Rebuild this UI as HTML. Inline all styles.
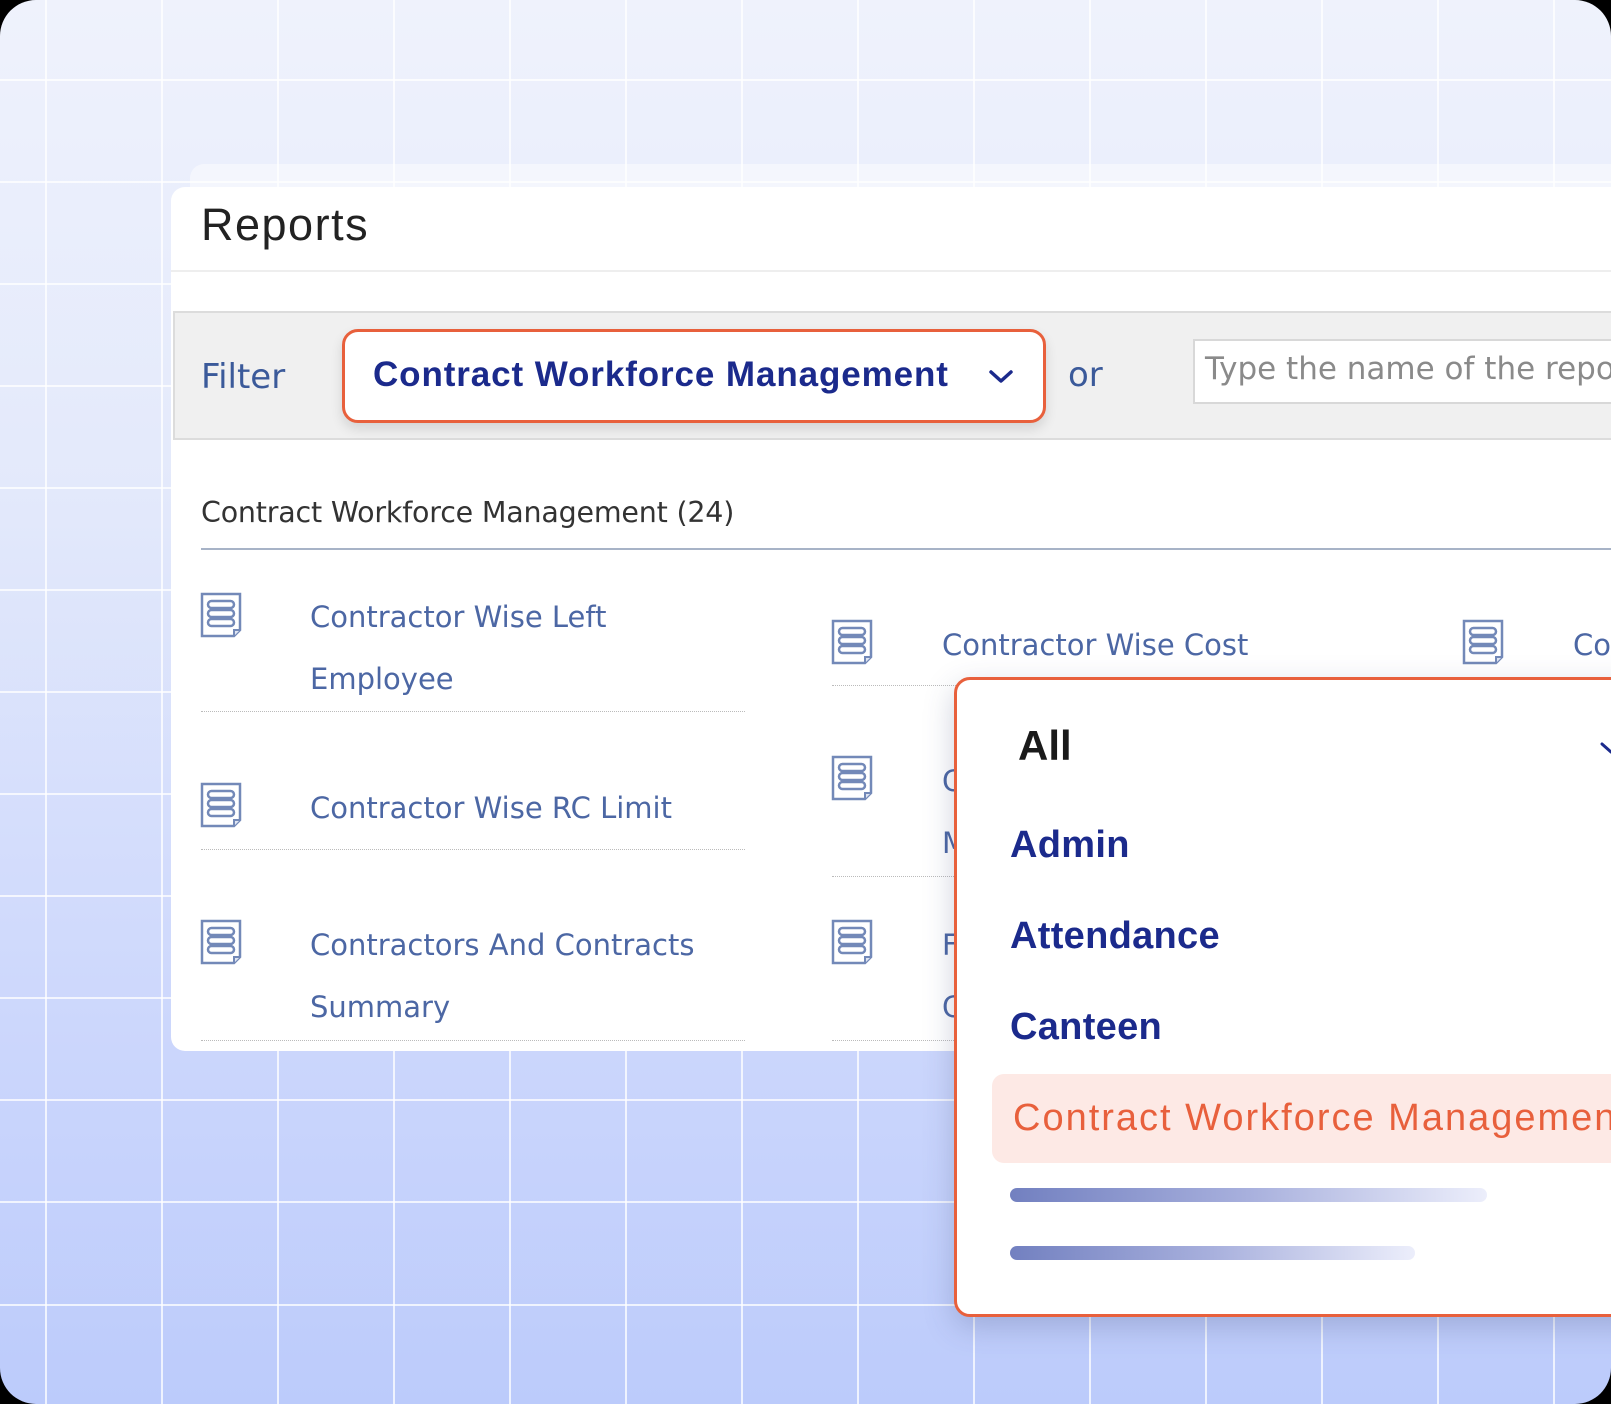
<!DOCTYPE html>
<html><head><meta charset="utf-8"><style>
*{margin:0;padding:0;box-sizing:border-box}
html,body{width:1611px;height:1404px;overflow:hidden;background:#000}
#bg{position:absolute;left:0;top:0;width:1611px;height:1404px;border-radius:36px;overflow:hidden;
background:linear-gradient(180deg,#eff2fc 0%,#e3e9fb 35%,#cbd6fc 75%,#bccbfb 100%);font-family:"Liberation Sans","DejaVu Sans",sans-serif}
.vl{position:absolute;top:0;width:2px;height:1404px;background:rgba(255,255,255,.75)}
.hl{position:absolute;left:0;height:2px;width:1611px;background:rgba(255,255,255,.75)}
.abs{position:absolute;white-space:nowrap}
.card{position:absolute;left:171px;top:187px;width:1500px;height:864px;background:#fff;border-radius:14px}
.it{position:absolute;font-family:"DejaVu Sans","Liberation Sans",sans-serif;font-size:29px;color:#4c67a4;white-space:nowrap;letter-spacing:0}
.dot{position:absolute;height:0;border-top:1px dotted #bbb}
.ic{position:absolute;width:42px;height:46px}
.pop{position:absolute;left:954px;top:677px;width:720px;height:640px;background:#fff;border:3px solid #e8603c;border-radius:16px;box-shadow:0 10px 30px rgba(60,70,120,.25)}
.opt{position:absolute;font-size:38px;color:#1b2a8c;white-space:nowrap;font-weight:700;letter-spacing:0.3px}
</style></head><body>
<div id="bg">
<div class="vl" style="left:45px"></div><div class="vl" style="left:161px"></div><div class="vl" style="left:277px"></div><div class="vl" style="left:393px"></div><div class="vl" style="left:509px"></div><div class="vl" style="left:625px"></div><div class="vl" style="left:741px"></div><div class="vl" style="left:857px"></div><div class="vl" style="left:973px"></div><div class="vl" style="left:1089px"></div><div class="vl" style="left:1205px"></div><div class="vl" style="left:1321px"></div><div class="vl" style="left:1437px"></div><div class="vl" style="left:1553px"></div>
<div class="hl" style="top:79px"></div><div class="hl" style="top:181px"></div><div class="hl" style="top:283px"></div><div class="hl" style="top:385px"></div><div class="hl" style="top:487px"></div><div class="hl" style="top:589px"></div><div class="hl" style="top:691px"></div><div class="hl" style="top:793px"></div><div class="hl" style="top:895px"></div><div class="hl" style="top:997px"></div><div class="hl" style="top:1099px"></div><div class="hl" style="top:1201px"></div><div class="hl" style="top:1304px"></div>
<div style="position:absolute;left:190px;top:164px;width:1500px;height:40px;background:rgba(255,255,255,.45);border-radius:14px"></div>
<div class="card">
 <div class="abs" style="left:30px;top:12px;font-size:45px;color:#222;letter-spacing:1.5px">Reports</div>
 <div style="position:absolute;left:0;top:83px;width:1500px;height:2px;background:#eee"></div>
 <div style="position:absolute;left:2px;top:124px;width:1500px;height:129px;background:#f0f0f0;border:2px solid #dcdcdc"></div>
 <div class="abs" style="left:30px;top:170px;font-family:'DejaVu Sans',sans-serif;font-size:34px;color:#3b5a9a">Filter</div>
 <div style="position:absolute;left:171px;top:142px;width:704px;height:94px;background:#fff;border:3px solid #e8603c;border-radius:16px;box-shadow:0 6px 12px rgba(0,0,0,.12)">
  <div class="abs" style="left:28px;top:23px;font-size:35px;color:#1b2a8c;font-weight:700;letter-spacing:0.9px">Contract Workforce Management</div>
  <svg class="abs" style="left:643px;top:36px" width="26" height="18" viewBox="0 0 26 18"><path d="M3 4 L13 13 L23 4" fill="none" stroke="#1b2a8c" stroke-width="3.5" stroke-linecap="round" stroke-linejoin="round"/></svg>
 </div>
 <div class="abs" style="left:897px;top:168px;font-family:'DejaVu Sans',sans-serif;font-size:34px;color:#3b5a9a">or</div>
 <div style="position:absolute;left:1022px;top:152px;width:500px;height:65px;background:#fff;border:2px solid #d8d8d8"></div>
 <div class="abs" style="left:1034px;top:164px;font-family:'DejaVu Sans',sans-serif;font-size:31px;color:#8a8a8a;letter-spacing:0">Type the name of the report</div>
 <div class="abs" style="left:30px;top:309px;font-family:'DejaVu Sans',sans-serif;font-size:28.5px;color:#333;letter-spacing:-0.2px">Contract Workforce Management (24)</div>
 <div style="position:absolute;left:30px;top:361px;width:1480px;height:2px;background:#a7b3c7"></div>
</div>
<svg width="0" height="0" style="position:absolute"><defs><g id="doc"><path d="M2 2 H40 V38 L34 44 H2 Z" fill="#fff" stroke="#7389b8" stroke-width="2.5"/><path d="M40 38 H34 V44" fill="#dfe5f2" stroke="#7389b8" stroke-width="2"/><rect x="8" y="9" width="26" height="7" rx="3.5" fill="none" stroke="#7389b8" stroke-width="2.5"/><rect x="8" y="18" width="26" height="7" rx="3.5" fill="none" stroke="#7389b8" stroke-width="2.5"/><rect x="8" y="27" width="26" height="7" rx="3.5" fill="none" stroke="#7389b8" stroke-width="2.5"/></g></defs></svg>
<svg class="ic" style="left:200px;top:592px" viewBox="0 0 42 46"><use href="#doc"/></svg>
<svg class="ic" style="left:200px;top:782px" viewBox="0 0 42 46"><use href="#doc"/></svg>
<svg class="ic" style="left:200px;top:919px" viewBox="0 0 42 46"><use href="#doc"/></svg>
<svg class="ic" style="left:831px;top:619px" viewBox="0 0 42 46"><use href="#doc"/></svg>
<svg class="ic" style="left:831px;top:755px" viewBox="0 0 42 46"><use href="#doc"/></svg>
<svg class="ic" style="left:831px;top:919px" viewBox="0 0 42 46"><use href="#doc"/></svg>
<svg class="ic" style="left:1462px;top:619px" viewBox="0 0 42 46"><use href="#doc"/></svg>
<div class="it" style="left:310px;top:600px">Contractor Wise Left</div>
<div class="it" style="left:310px;top:662px">Employee</div>
<div class="dot" style="left:201px;top:711px;width:544px"></div>
<div class="it" style="left:310px;top:791px">Contractor Wise RC Limit</div>
<div class="dot" style="left:201px;top:849px;width:544px"></div>
<div class="it" style="left:310px;top:928px">Contractors And Contracts</div>
<div class="it" style="left:310px;top:990px">Summary</div>
<div class="dot" style="left:201px;top:1040px;width:544px"></div>
<div class="it" style="left:942px;top:628px">Contractor Wise Cost</div>
<div class="dot" style="left:832px;top:685px;width:544px"></div>
<div class="it" style="left:942px;top:764px">C</div>
<div class="it" style="left:942px;top:826px">M</div>
<div class="dot" style="left:832px;top:876px;width:544px"></div>
<div class="it" style="left:942px;top:928px">F</div>
<div class="it" style="left:942px;top:990px">C</div>
<div class="dot" style="left:832px;top:1040px;width:544px"></div>
<div class="it" style="left:1573px;top:628px">Co</div>
<div class="pop">
 <div class="abs" style="left:61px;top:42px;font-size:42px;color:#1a1a1a;font-weight:700">All</div>
 <svg class="abs" style="left:642px;top:60px" width="20" height="16"><path d="M3 4 L12 12" fill="none" stroke="#1b2a8c" stroke-width="3" stroke-linecap="round"/></svg>
 <div class="opt" style="left:53px;top:144px">Admin</div>
 <div class="opt" style="left:53px;top:235px">Attendance</div>
 <div class="opt" style="left:53px;top:326px">Canteen</div>
 <div style="position:absolute;left:35px;top:394px;width:700px;height:89px;background:#fde9e5;border-radius:12px"></div>
 <div class="opt" style="left:56px;top:417px;color:#e8603c;font-weight:400;letter-spacing:2px">Contract Workforce Management</div>
 <div style="position:absolute;left:53px;top:508px;width:477px;height:14px;border-radius:7px;background:linear-gradient(90deg,#7280c0,#a8b0dd 50%,#eceefb)"></div>
 <div style="position:absolute;left:53px;top:566px;width:405px;height:14px;border-radius:7px;background:linear-gradient(90deg,#7280c0,#a8b0dd 50%,#eceefb)"></div>
</div>
</div>
</body></html>
